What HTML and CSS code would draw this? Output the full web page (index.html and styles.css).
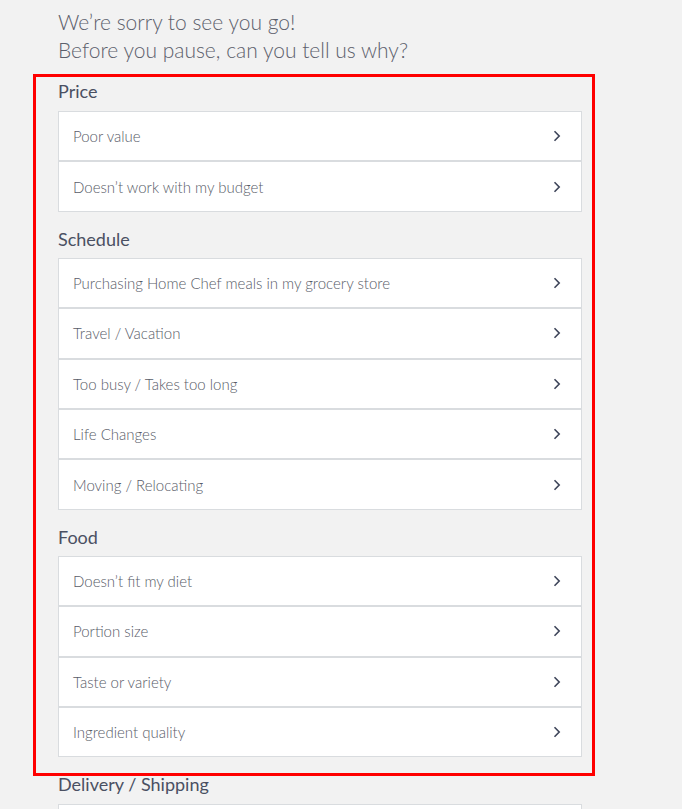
FILE: index.html
```html
<!DOCTYPE html>
<html>
<head>
    <title>Pause Subscription</title>
    <link rel="stylesheet" href="styles.css">
</head>
<body>
    <div class="page">
        <h1 class="intro">We’re sorry to see you go!<br>Before you pause, can you tell us why?</h1>

        <div class="highlight">
            <h2 class="group-title first">Price</h2>
            <ul class="reasons">
                <li class="reason">Poor value<span class="chevron"><svg width="8" height="12" viewBox="0 0 8 12"><path d="M1.5 1.2 L6.2 6 L1.5 10.8" fill="none" stroke="#3d4459" stroke-width="1.6"/></svg></span></li>
                <li class="reason">Doesn’t work with my budget<span class="chevron"><svg width="8" height="12" viewBox="0 0 8 12"><path d="M1.5 1.2 L6.2 6 L1.5 10.8" fill="none" stroke="#3d4459" stroke-width="1.6"/></svg></span></li>
            </ul>

            <h2 class="group-title">Schedule</h2>
            <ul class="reasons">
                <li class="reason">Purchasing Home Chef meals in my grocery store<span class="chevron"><svg width="8" height="12" viewBox="0 0 8 12"><path d="M1.5 1.2 L6.2 6 L1.5 10.8" fill="none" stroke="#3d4459" stroke-width="1.6"/></svg></span></li>
                <li class="reason">Travel / Vacation<span class="chevron"><svg width="8" height="12" viewBox="0 0 8 12"><path d="M1.5 1.2 L6.2 6 L1.5 10.8" fill="none" stroke="#3d4459" stroke-width="1.6"/></svg></span></li>
                <li class="reason">Too busy / Takes too long<span class="chevron"><svg width="8" height="12" viewBox="0 0 8 12"><path d="M1.5 1.2 L6.2 6 L1.5 10.8" fill="none" stroke="#3d4459" stroke-width="1.6"/></svg></span></li>
                <li class="reason">Life Changes<span class="chevron"><svg width="8" height="12" viewBox="0 0 8 12"><path d="M1.5 1.2 L6.2 6 L1.5 10.8" fill="none" stroke="#3d4459" stroke-width="1.6"/></svg></span></li>
                <li class="reason">Moving / Relocating<span class="chevron"><svg width="8" height="12" viewBox="0 0 8 12"><path d="M1.5 1.2 L6.2 6 L1.5 10.8" fill="none" stroke="#3d4459" stroke-width="1.6"/></svg></span></li>
            </ul>

            <h2 class="group-title">Food</h2>
            <ul class="reasons">
                <li class="reason">Doesn’t fit my diet<span class="chevron"><svg width="8" height="12" viewBox="0 0 8 12"><path d="M1.5 1.2 L6.2 6 L1.5 10.8" fill="none" stroke="#3d4459" stroke-width="1.6"/></svg></span></li>
                <li class="reason">Portion size<span class="chevron"><svg width="8" height="12" viewBox="0 0 8 12"><path d="M1.5 1.2 L6.2 6 L1.5 10.8" fill="none" stroke="#3d4459" stroke-width="1.6"/></svg></span></li>
                <li class="reason">Taste or variety<span class="chevron"><svg width="8" height="12" viewBox="0 0 8 12"><path d="M1.5 1.2 L6.2 6 L1.5 10.8" fill="none" stroke="#3d4459" stroke-width="1.6"/></svg></span></li>
                <li class="reason">Ingredient quality<span class="chevron"><svg width="8" height="12" viewBox="0 0 8 12"><path d="M1.5 1.2 L6.2 6 L1.5 10.8" fill="none" stroke="#3d4459" stroke-width="1.6"/></svg></span></li>
            </ul>
        </div>

        <div class="after">
            <h2 class="group-title first">Delivery / Shipping</h2>
            <ul class="reasons">
                <li class="reason"></li>
            </ul>
        </div>
    </div>
</body>
</html>
```

FILE: styles.css
```css
body {
    margin: 0;
    background-color: #f2f2f2;
    font-family: Lato, "Open Sans", Arial, sans-serif;
}

.page {
    width: 524px;
    padding: 8px 0 0 58px;
}

.intro {
    margin: 0 0 10px 0;
    font-size: 21px;
    font-weight: 300;
    line-height: 28px;
    color: #5c606c;
}

.highlight {
    margin-left: -25px;
    width: 524px;
    padding: 3px 10px 16px 22px;
    border: 3px solid #ff0000;
}

.after {
    margin-top: -3px;
}

.group-title {
    margin: 16px 0 8px 0;
    font-size: 18px;
    font-weight: normal;
    line-height: 22px;
    color: #4a5062;
}

.group-title.first {
    margin-top: 0;
    margin-bottom: 9px;
}

.reasons {
    list-style: none;
    margin: 0;
    padding: 0;
}

.reason {
    display: flex;
    justify-content: space-between;
    align-items: center;
    box-sizing: border-box;
    height: 50.4px;
    padding: 0 20px 0 14px;
    background-color: #fff;
    border: 1px solid #d9dcdf;
    font-size: 15px;
    font-weight: 300;
    color: #585c68;
}

.chevron {
    display: flex;
    align-items: center;
}
```
